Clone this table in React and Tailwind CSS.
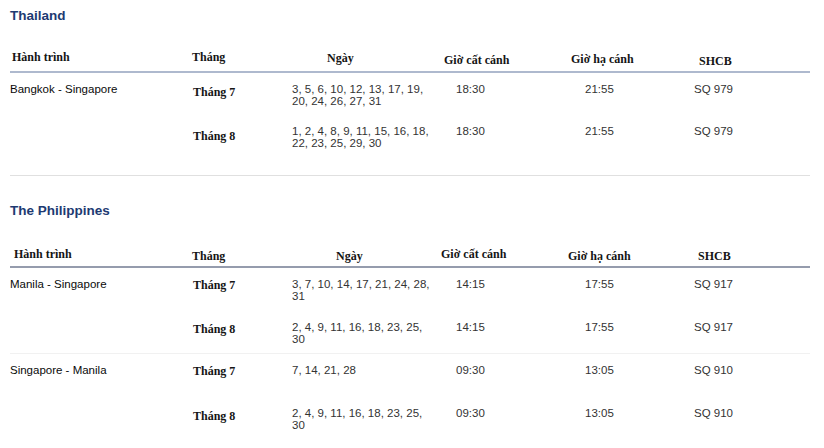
const sans = { fontFamily: '"Liberation Sans", Arial, sans-serif' };
const serif = { fontFamily: '"Liberation Serif", "Times New Roman", serif' };

const sections = [
  {
    title: 'Thailand',
    wrap: 'pt-[6px] pb-[18px] border-b border-[#e0e0e0]',
    line: 'border-[#aeb9ce]',
    rowH: 'h-[42px]',
    head: [
      'pl-[2px] pb-[6px]',
      'pl-[10px] pb-[6px]',
      'pl-[45px] pb-[5px]',
      'pl-[8px] pb-[3px]',
      'pl-[11px] pb-[4px]',
      'pl-[19px] pb-[2px]',
    ],
    routes: [
      {
        name: 'Bangkok - Singapore',
        months: [
          { m: 'Tháng 7', pt: 'pt-[11px]', days: ['3, 5, 6, 10, 12, 13, 17, 19,', '20, 24, 26, 27, 31'], dep: '18:30', arr: '21:55', no: 'SQ 979' },
          { m: 'Tháng 8', pt: 'pt-[13px]', days: ['1, 2, 4, 8, 9, 11, 15, 16, 18,', '22, 23, 25, 29, 30'], dep: '18:30', arr: '21:55', no: 'SQ 979' },
        ],
      },
    ],
  },
  {
    title: 'The Philippines',
    wrap: 'pt-[25px]',
    line: 'border-[#959cad]',
    rowH: 'h-[43px]',
    head: [
      'pl-[4px] pb-[4px]',
      'pl-[10px] pb-[2px]',
      'pl-[54px] pb-[2px]',
      'pl-[5px] pb-[4px]',
      'pl-[8px] pb-[2px]',
      'pl-[18px] pb-[2px]',
    ],
    routes: [
      {
        name: 'Manila - Singapore',
        months: [
          { m: 'Tháng 7', pt: 'pt-[9px]', days: ['3, 7, 10, 14, 17, 21, 24, 28,', '31'], dep: '14:15', arr: '17:55', no: 'SQ 917' },
          { m: 'Tháng 8', pt: 'pt-[10px]', days: ['2, 4, 9, 11, 16, 18, 23, 25,', '30'], dep: '14:15', arr: '17:55', no: 'SQ 917' },
        ],
      },
      {
        name: 'Singapore - Manila',
        months: [
          { m: 'Tháng 7', pt: 'pt-[9px]', days: ['7, 14, 21, 28'], dep: '09:30', arr: '13:05', no: 'SQ 910' },
          { m: 'Tháng 8', pt: 'pt-[11px]', days: ['2, 4, 9, 11, 16, 18, 23, 25,', '30'], dep: '09:30', arr: '13:05', no: 'SQ 910' },
        ],
      },
    ],
  },
];

const headers = ['Hành trình', 'Tháng', 'Ngày', 'Giờ cất cánh', 'Giờ hạ cánh', 'SHCB'];
const widths = ['w-[172px]', 'w-[100px]', 'w-[154px]', 'w-[124px]', 'w-[120px]', 'w-[130px]'];

function MonthRow({ row, height }) {
  return (
    <div className={`flex ${height}`}>
      <div className={`w-[100px] pl-[11px] ${row.pt} text-[12px] leading-4 font-bold text-[#151515]`} style={serif}>
        {row.m}
      </div>
      <div className="w-[154px] pl-[10px] pt-[10px] text-[11.5px] leading-3 text-[#333]">
        {row.days.map((d) => (
          <div key={d}>{d}</div>
        ))}
      </div>
      <div className="w-[124px] pl-[20px] pt-[10px] text-[11.5px] leading-3 text-[#333]">{row.dep}</div>
      <div className="w-[120px] pl-[25px] pt-[10px] text-[11.5px] leading-3 text-[#333]">{row.arr}</div>
      <div className="w-[130px] pl-[14px] pt-[10px] text-[11.5px] leading-3 text-[#333]">{row.no}</div>
    </div>
  );
}

function Section({ s }) {
  return (
    <section className={s.wrap}>
      <h2 className="h-5 text-[13.5px] leading-5 font-semibold text-[#1d3a72]">{s.title}</h2>
      <div className={`mt-[17px] flex h-[30px] items-end border-b-2 ${s.line}`} style={serif}>
        {headers.map((h, i) => (
          <div key={h} className={`${widths[i]} ${s.head[i]} text-[12px] leading-4 font-bold text-[#151515]`}>
            {h}
          </div>
        ))}
      </div>
      {s.routes.map((r, ri) => {
        const divided = ri < s.routes.length - 1;
        return (
          <div key={r.name} className={`flex ${divided ? 'border-b border-[#f1f1f1]' : ''}`}>
            <div className="w-[172px] pt-[10px] text-[11.5px] leading-3 text-[#0a0a0a]">{r.name}</div>
            <div className="flex flex-col">
              {r.months.map((row, i) => (
                <MonthRow
                  key={row.m}
                  row={row}
                  height={divided && i === r.months.length - 1 ? 'h-[42px]' : s.rowH}
                />
              ))}
            </div>
          </div>
        );
      })}
    </section>
  );
}

export default function App() {
  return (
    <div className="h-[448px] w-[824px] overflow-hidden bg-white" style={sans}>
      <div className="ml-[10px] w-[800px]">
        {sections.map((s) => (
          <Section key={s.title} s={s} />
        ))}
      </div>
    </div>
  );
}
